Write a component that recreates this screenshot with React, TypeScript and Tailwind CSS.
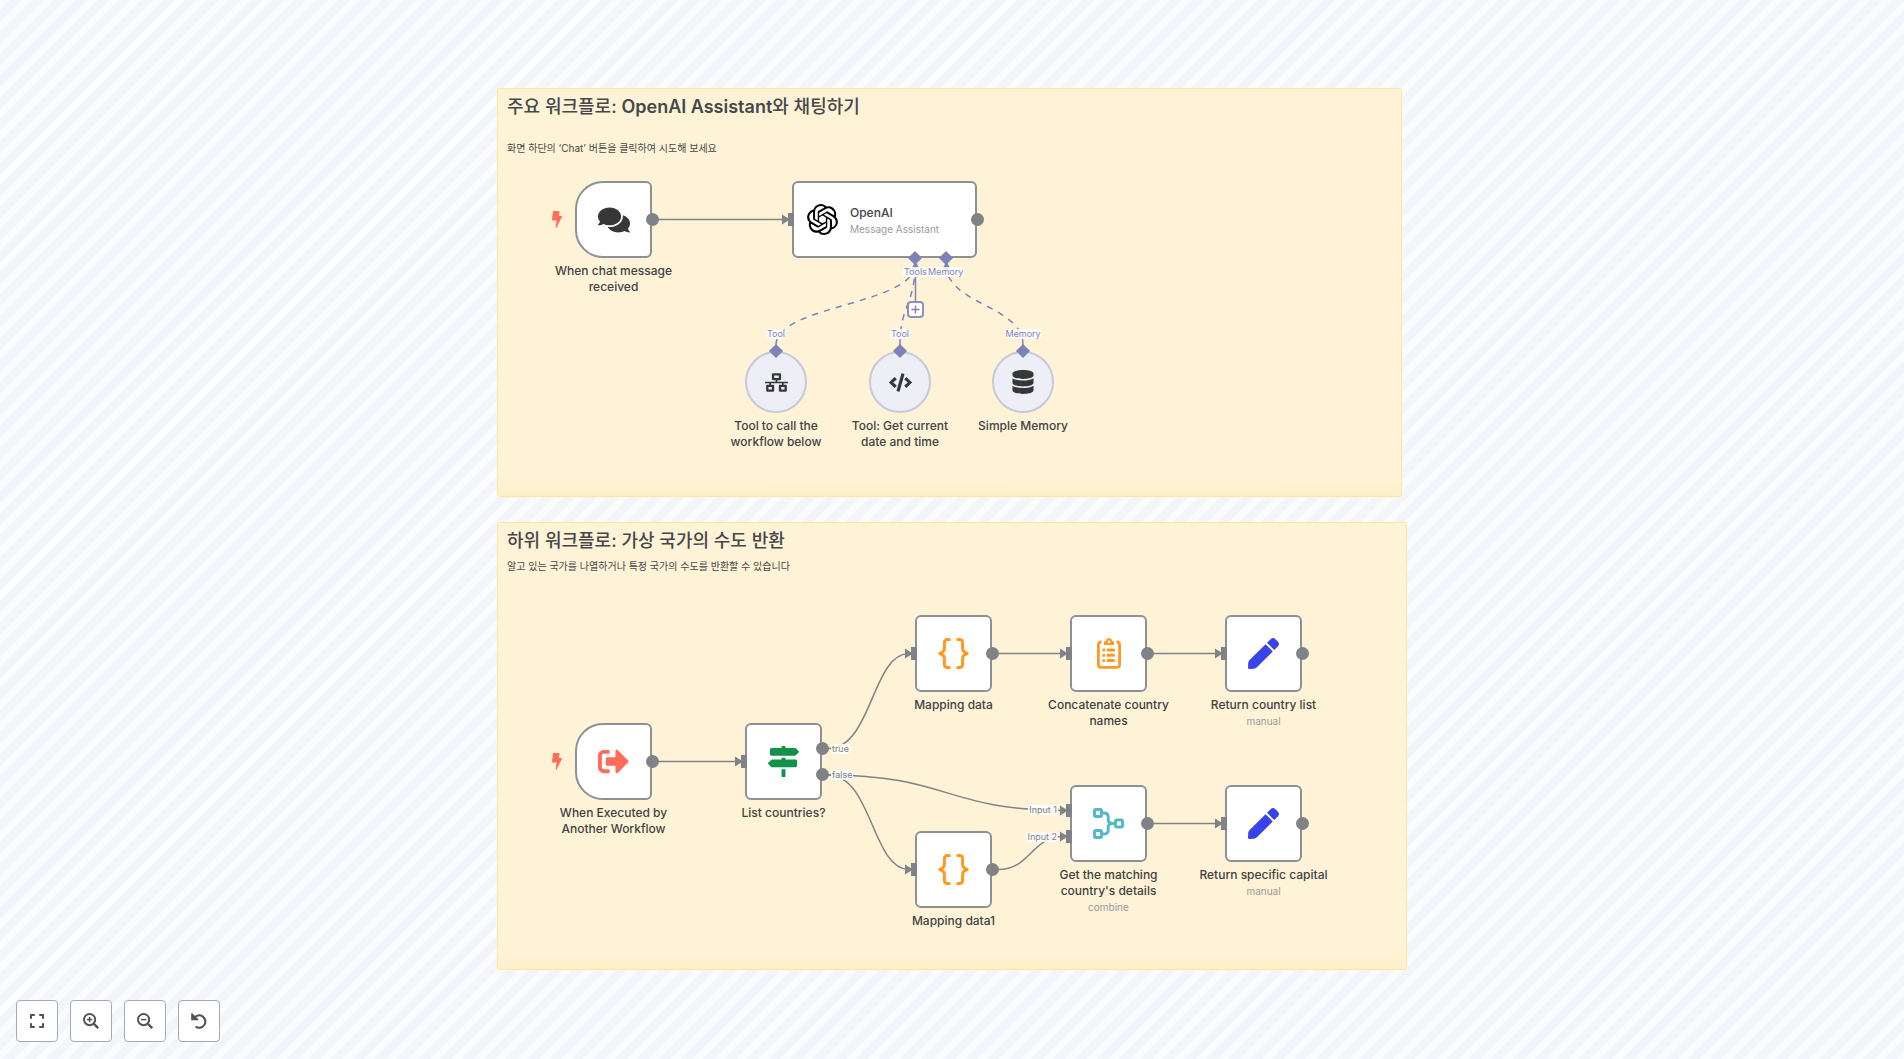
import type { ReactNode } from "react";
import { FaCode, FaComments, FaDatabase, FaMapSigns, FaNetworkWired, FaSignOutAlt } from "react-icons/fa";
import { FaExpand } from "react-icons/fa6";
import { SiOpenai } from "react-icons/si";

const BracesIcon = () => (
  <svg viewBox="0 0 31 31" className="size-[31px] text-[#ff9922]" fill="none" stroke="currentColor" strokeWidth="3" strokeLinecap="round" strokeLinejoin="round" aria-hidden="true">
    <path d="M11.3 1.6H9.4C7.4 1.6 6.4 2.8 6.4 4.8V10.6C6.4 13.2 4.6 14.6 1.8 15.5C4.6 16.4 6.4 17.8 6.4 20.4V26.2C6.4 28.2 7.4 29.4 9.4 29.4H11.3" />
    <path d="M19.7 1.6H21.6C23.6 1.6 24.6 2.8 24.6 4.8V10.6C24.6 13.2 26.4 14.6 29.2 15.5C26.4 16.4 24.6 17.8 24.6 20.4V26.2C24.6 28.2 23.6 29.4 21.6 29.4H19.7" />
  </svg>
);

const ClipboardIcon = () => (
  <svg viewBox="0 0 24 31" className="h-[31px] w-6 text-[#ff9922]" fill="none" stroke="currentColor" aria-hidden="true">
    <path d="M4.5 4H4A2.6 2.6 0 0 0 1.4 6.6V26.8A2.6 2.6 0 0 0 4 29.4H20A2.6 2.6 0 0 0 22.6 26.8V6.6A2.6 2.6 0 0 0 20 4H19.5" strokeWidth="2.8" />
    <path d="M7 7V4.6C7 3.6 7.6 3 8.6 3H8.9C9.3 1.2 10.5 0 12 0S14.7 1.2 15.1 3H15.4C16.4 3 17 3.6 17 4.6V7ZM12 2.6A1.3 1.3 0 1 0 12 5.2A1.3 1.3 0 1 0 12 2.6Z" fill="currentColor" fillRule="evenodd" stroke="none" />
    <path d="M10.8 12H16.6M10.8 17.3H16.6M10.8 22.6H16.6" strokeWidth="3" strokeLinecap="round" />
    <path d="M5.4 12H8M5.4 17.3H8M5.4 22.6H8" strokeWidth="2.8" />
  </svg>
);

const PencilIcon = () => (
  <svg viewBox="0 0 31 31" className="size-[31px] text-[#3a42e9]" fill="currentColor" aria-hidden="true">
    <path d="M17.6 6.2L24.8 13.4L9.4 28.8C8.2 30 7.2 30.6 5.6 30.7L1.2 31C.5 31 0 30.5 0 29.8L.2 25.2C.3 23.7 .9 22.7 1.9 21.7Z" />
    <path d="M19 4.8L22.4 1.4C24.2-.4 25.8-.4 27.4 1.2L29.8 3.6C31.4 5.2 31.4 6.8 29.8 8.4L26.2 12Z" />
  </svg>
);

const MergeIcon = () => (
  <svg viewBox="0 0 31 31" className="size-[31px] text-[#54b8c9]" fill="none" stroke="currentColor" strokeWidth="2.9" aria-hidden="true">
    <rect x="1.5" y="1.5" width="7" height="7" rx="1.2" />
    <rect x="1.5" y="22.5" width="7" height="7" rx="1.2" />
    <rect x="22.5" y="12" width="7" height="7" rx="1.2" />
    <path d="M8.4 5H11.2C13.8 5 15.2 6.4 15.2 9V11.6C15.2 14 16.4 15.5 19 15.5H22.6M8.4 26H11.2C13.8 26 15.2 24.6 15.2 22V19.4C15.2 17 16.4 15.5 19 15.5" />
  </svg>
);

const BoltIcon = () => (
  <svg viewBox="0 0 10 17" className="absolute -left-[25px] top-[28px] h-[17px] w-[10px] text-[#ff6d5a]" fill="currentColor" aria-hidden="true">
    <path d="M1.6 0H6.9C7.4 0 7.6 .3 7.5 .8L6.8 5H9.4C10 5 10.1 5.4 9.9 5.9L4.5 16.6C4.2 17.2 3.5 17 3.6 16.3L4.6 9.6H.6C.2 9.6 0 9.3 0 8.9L.9 .7C1 .2 1.2 0 1.6 0Z" />
  </svg>
);

const MagnifierIcon = ({ plus }: { plus?: boolean }) => (
  <svg viewBox="0 0 16 16" className="size-4" fill="none" stroke="currentColor" aria-hidden="true">
    <circle cx="6.6" cy="6.6" r="5.6" strokeWidth="2" />
    <path d="M10.9 10.9L15.2 15.2" strokeWidth="2.4" />
    <path d={plus ? "M6.6 3.9V9.3M3.9 6.6H9.3" : "M3.9 6.6H9.3"} strokeWidth="1.5" />
  </svg>
);

const ResetIcon = () => (
  <svg viewBox="0 0 16 16" className="size-4" fill="none" stroke="currentColor" aria-hidden="true">
    <path d="M2.9 5.2A6.2 6.2 0 1 1 4.6 13.6" strokeWidth="2.1" />
    <path d="M.2 .2H1.2L7.4 6.2V7.2H.2Z" fill="currentColor" stroke="none" />
  </svg>
);

type Port = "center" | "upper" | "lower";

const portTop: Record<Port, string> = {
  center: "top-[30px]",
  upper: "top-[17px]",
  lower: "top-[43px]",
};

const InputPort = ({ port = "center" }: { port?: Port }) => <i className={`absolute -left-[6px] h-[13px] w-[6px] bg-[#7f8287] ${portTop[port]}`} />;

const OutputPort = ({ port = "center" }: { port?: Port }) => <i className={`absolute -right-[9px] size-[13px] rounded-full bg-[#7f8287] ${portTop[port]}`} />;

type NodeProps = {
  place: string;
  label: string;
  subtitle?: string;
  trigger?: boolean;
  labelWidth?: string;
  inputs?: Port[];
  outputs?: Port[];
  children: ReactNode;
};

function WorkflowNode({ place, label, subtitle, trigger, labelWidth = "w-32", inputs = ["center"], outputs = ["center"], children }: NodeProps) {
  return (
    <div className={`absolute flex w-[77px] flex-col items-center ${place}`}>
      <div className={`relative flex size-[77px] items-center justify-center border-2 border-[#8d9095] bg-white ${trigger ? "rounded-l-[28px] rounded-r-md" : "rounded-md"}`}>
        {trigger && <BoltIcon />}
        {children}
        {!trigger && inputs.map((p) => <InputPort key={p} port={p} />)}
        {outputs.map((p) => <OutputPort key={p} port={p} />)}
      </div>
      <div className={`mt-[5px] text-center text-[12px] leading-4 font-medium text-[#414244] ${labelWidth}`}>{label}</div>
      {subtitle && <div className="mt-px text-center text-[10px] leading-[14px] text-[#9a9a9c]">{subtitle}</div>}
    </div>
  );
}

const Diamond = ({ place }: { place: string }) => <i className={`absolute size-[10px] rotate-45 bg-[#7d83b8] ${place}`} />;

function ToolNode({ place, label, children }: { place: string; label: string; children: ReactNode }) {
  return (
    <div className={`absolute flex w-[62px] flex-col items-center ${place}`}>
      <div className="relative flex size-[62px] items-center justify-center rounded-full border-2 border-[#c5c9d8] bg-[#eeeff6] text-[#373737]">
        <Diamond place="-top-[7px] left-[24px]" />
        {children}
      </div>
      <div className="mt-[5px] w-28 text-center text-[12px] leading-4 font-medium text-[#414244]">{label}</div>
    </div>
  );
}

function PortLabel({ place, ai, children }: { place: string; ai?: boolean; children: ReactNode }) {
  return (
    <span className={`absolute rounded-sm bg-white/85 px-px text-[9px] leading-[10px] whitespace-nowrap ${ai ? "text-[#7d83b8]" : "text-[#7f8287]"} ${place}`}>
      {children}
    </span>
  );
}

const mainEdges = [
  "M161 131.5H286",
  "M161 673.5H239",
  "M331 660.5C375 660.5 375 565.5 412 565.5",
  "M331 687C450 687 450 722.5 567 722.5",
  "M331 687C375 687 375 781.5 412 781.5",
  "M501 565.5H567",
  "M656 565.5H722",
  "M501 781.5C534 781.5 534 748.5 567 748.5",
  "M656 735.5H722",
];

const arrowTips = [
  [293, 131.5],
  [246, 673.5],
  [416, 565.5],
  [571, 565.5],
  [726, 565.5],
  [571, 722.5],
  [571, 748.5],
  [416, 781.5],
  [726, 735.5],
];

function Edges() {
  return (
    <svg viewBox="0 0 910 883" className="absolute inset-0 size-full" fill="none" aria-hidden="true">
      <g stroke="#7f8287" strokeWidth="1.5">
        {mainEdges.map((d) => <path key={d} d={d} />)}
      </g>
      <g fill="#7f8287">
        {arrowTips.map(([x, y]) => <path key={`${x}-${y}`} d={`M${x} ${y}L${x - 8} ${y - 5}V${y + 5}Z`} />)}
      </g>
      <g stroke="#7d83b8" strokeWidth="1.5">
        <g strokeDasharray="6.2 6.2">
          <path d="M279 257C279 217 418 217 418 176" />
          <path d="M403 257C403 217 418 217 418 176" />
          <path d="M526 257C526 217 449 217 449 176" />
        </g>
        <path d="M418.5 176V213" />
      </g>
      <path d="M418.5 173L414.5 181H422.5ZM449.5 173L445.5 181H453.5Z" fill="#7d83b8" />
    </svg>
  );
}

function Sticky({ place, title, gap, text }: { place: string; title: ReactNode; gap: string; text: string }) {
  return (
    <section className={`absolute rounded-[3px] border border-[#fde79b] bg-linear-to-t from-[#fff0c8] to-[#fff3d7] to-[16px] px-[9px] text-[#46474a] ${place}`}>
      <h2 className="mt-[6px] text-[18px] leading-6 font-medium">{title}</h2>
      <p className={`text-[10px] leading-4 ${gap}`}>{text}</p>
    </section>
  );
}

function ControlButton({ label, children }: { label: string; children: ReactNode }) {
  return (
    <button type="button" aria-label={label} className="flex size-[42px] items-center justify-center rounded border border-[#a5a8b8] bg-white text-[#525356] hover:bg-gray-50">
      {children}
    </button>
  );
}

export default function App() {
  return (
    <main className="relative flex min-h-screen w-full items-center justify-center overflow-hidden bg-[#fbfcff] font-[Inter,'Noto_Sans_CJK_KR',sans-serif]">
      <svg className="absolute inset-0 size-full" aria-hidden="true">
        <defs>
          <pattern id="stripes" width="20" height="20" patternUnits="userSpaceOnUse" patternTransform="scale(.774) rotate(45)">
            <rect x="9" width="11" height="20" fill="#f4f5fb" />
          </pattern>
        </defs>
        <rect width="100%" height="100%" fill="url(#stripes)" />
      </svg>

      <div className="relative h-[883px] w-[910px] shrink-0">
        <Sticky
          place="left-0 top-0 h-[409px] w-[905px]"
          title={<>주요 워크플로: <span className="font-semibold">OpenAI Assistant</span>와 채팅하기</>}
          gap="mt-[21px]"
          text="화면 하단의 ‘Chat’ 버튼을 클릭하여 시도해 보세요"
        />
        <Sticky place="left-0 top-[434px] h-[448px] w-[910px]" title="하위 워크플로: 가상 국가의 수도 반환" gap="mt-[5px]" text="알고 있는 국가를 나열하거나 특정 국가의 수도를 반환할 수 있습니다" />

        <Edges />

        <WorkflowNode place="left-[78px] top-[93px]" label="When chat message received" trigger>
          <FaComments className="size-8 text-[#373737]" />
        </WorkflowNode>

        <div className="absolute left-[295px] top-[93px] flex h-[77px] w-[185px] items-center gap-3 rounded-md border-2 border-[#8d9095] bg-white pl-[13px]">
          <SiOpenai className="size-[31px] text-black" />
          <div className="pt-[3px]">
            <div className="text-[12px] leading-4 font-medium text-[#414244]">OpenAI</div>
            <div className="text-[10px] leading-4 text-[#9a9a9c]">Message Assistant</div>
          </div>
          <InputPort />
          <OutputPort />
          <Diamond place="-bottom-[7px] left-[116px]" />
          <Diamond place="-bottom-[7px] left-[147px]" />
        </div>

        <ToolNode place="left-[248px] top-[263px]" label="Tool to call the workflow below">
          <FaNetworkWired className="size-[23px]" />
        </ToolNode>
        <ToolNode place="left-[372px] top-[263px]" label="Tool: Get current date and time">
          <FaCode className="size-[23px]" />
        </ToolNode>
        <ToolNode place="left-[495px] top-[263px]" label="Simple Memory">
          <FaDatabase className="size-6" />
        </ToolNode>

        <PortLabel place="left-[406px] top-[179px]" ai>Tools</PortLabel>
        <PortLabel place="left-[430px] top-[179px]" ai>Memory</PortLabel>
        <PortLabel place="left-[279px] top-[241px] -translate-x-1/2" ai>Tool</PortLabel>
        <PortLabel place="left-[403px] top-[241px] -translate-x-1/2" ai>Tool</PortLabel>
        <PortLabel place="left-[526px] top-[241px] -translate-x-1/2" ai>Memory</PortLabel>

        <button type="button" aria-label="Add tool" className="absolute left-[410px] top-[213px] flex size-[17px] items-center justify-center rounded border-2 border-[#8b90c0] bg-white text-[#7d83b8]">
          <svg viewBox="0 0 9 9" className="size-[9px] shrink-0" stroke="currentColor" strokeWidth="1.4" aria-hidden="true">
            <path d="M4.5 .5V8.5M.5 4.5H8.5" />
          </svg>
        </button>

        <WorkflowNode place="left-[78px] top-[635px]" label="When Executed by Another Workflow" trigger>
          <FaSignOutAlt className="size-[31px] text-[#ff6d5a]" />
        </WorkflowNode>
        <WorkflowNode place="left-[248px] top-[635px]" label="List countries?" outputs={["upper", "lower"]}>
          <FaMapSigns className="size-[31px] text-[#129149]" />
        </WorkflowNode>
        <WorkflowNode place="left-[418px] top-[527px]" label="Mapping data">
          <BracesIcon />
        </WorkflowNode>
        <WorkflowNode place="left-[418px] top-[743px]" label="Mapping data1">
          <BracesIcon />
        </WorkflowNode>
        <WorkflowNode place="left-[573px] top-[527px]" label="Concatenate country names">
          <ClipboardIcon />
        </WorkflowNode>
        <WorkflowNode place="left-[728px] top-[527px]" label="Return country list" subtitle="manual">
          <PencilIcon />
        </WorkflowNode>
        <WorkflowNode place="left-[573px] top-[697px]" label="Get the matching country's details" subtitle="combine" inputs={["upper", "lower"]}>
          <MergeIcon />
        </WorkflowNode>
        <WorkflowNode place="left-[728px] top-[697px]" label="Return specific capital" subtitle="manual" labelWidth="w-36">
          <PencilIcon />
        </WorkflowNode>

        <PortLabel place="left-[334px] top-[656px]">true</PortLabel>
        <PortLabel place="left-[334px] top-[682px]">false</PortLabel>
        <PortLabel place="right-[349px] top-[717px]">Input 1</PortLabel>
        <PortLabel place="right-[349px] top-[744px]">Input 2</PortLabel>
      </div>

      <div className="absolute bottom-[17px] left-4 flex gap-3">
        <ControlButton label="Fit to view"><FaExpand className="size-4" /></ControlButton>
        <ControlButton label="Zoom in"><MagnifierIcon plus /></ControlButton>
        <ControlButton label="Zoom out"><MagnifierIcon /></ControlButton>
        <ControlButton label="Reset zoom"><ResetIcon /></ControlButton>
      </div>
    </main>
  );
}
